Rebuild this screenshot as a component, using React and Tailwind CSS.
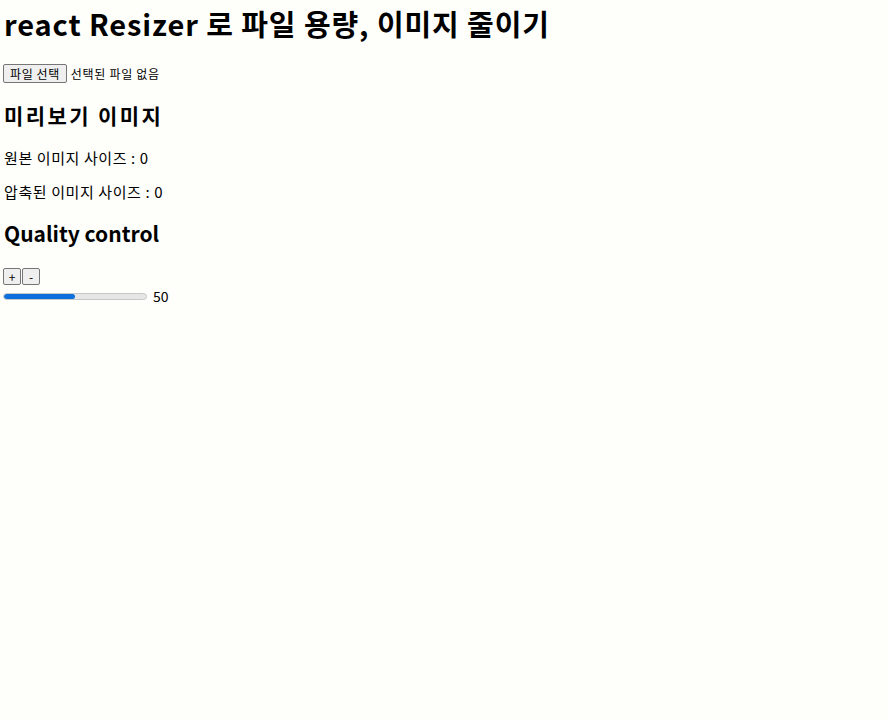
import { useState } from "react"

const font = { fontFamily: '"Noto Sans CJK KR", "Noto Sans", sans-serif' }

const App = () => {
  const [quality, setQuality] = useState(50)
  const [originalSize] = useState(0)
  const [compressedSize] = useState(0)

  return (
    <div className="min-h-screen w-full bg-[#fefefb] text-black" style={font}>
      <div className="flex flex-col items-start pl-[4px] pt-[1px]">
        {/* Title */}
        <h1 className="text-[29px] font-bold leading-[44px] tracking-[0.9px]">
          react Resizer 로 파일 용량, 이미지 줄이기
        </h1>

        {/* File input */}
        <div className="mt-[19px] flex items-center gap-[4px] -ml-[1px]">
          <button className="h-[19px] px-[6px] border border-[#767676] bg-[#efefef] text-[12px] leading-none tracking-[0.6px] rounded-[2px]">
            파일 선택
          </button>
          <span className="text-[12px] leading-none tracking-[0.7px]">선택된 파일 없음</span>
        </div>

        {/* Preview */}
        <h2 className="mt-[16px] text-[21px] font-bold leading-[32px] tracking-[2.4px]">미리보기 이미지</h2>
        <p className="mt-[17px] text-[15px] leading-[20px] tracking-[0.6px]">원본 이미지 사이즈 : {originalSize}</p>
        <p className="mt-[14px] text-[15px] leading-[20px] tracking-[0.6px]">압축된 이미지 사이즈 : {compressedSize}</p>

        {/* Quality */}
        <h2 className="mt-[15px] text-[21px] font-bold leading-[32px]">Quality control</h2>
        <div className="mt-[19px] flex gap-[1px] -ml-[1px]">
          <button
            onClick={() => setQuality((q) => Math.min(100, q + 10))}
            className="w-[18px] h-[17px] border border-[#767676] bg-[#efefef] text-[12px] leading-none rounded-[2px]"
          >
            +
          </button>
          <button
            onClick={() => setQuality((q) => Math.max(0, q - 10))}
            className="w-[18px] h-[17px] border border-[#767676] bg-[#efefef] text-[12px] leading-none rounded-[2px]"
          >
            -
          </button>
        </div>
        <div className="mt-[1px] flex items-center gap-[6px] -ml-[1px]">
          <div className="w-[144px] h-[7px] rounded-full border border-[#c8c8c8] bg-[#e6e6e6] overflow-hidden">
            <div className="h-full bg-[#0e70dc] rounded-full" style={{ width: `${quality}%` }}></div>
          </div>
          <span className="text-[14px] leading-[20px]">{quality}</span>
        </div>
      </div>
    </div>
  )
}

export default App
